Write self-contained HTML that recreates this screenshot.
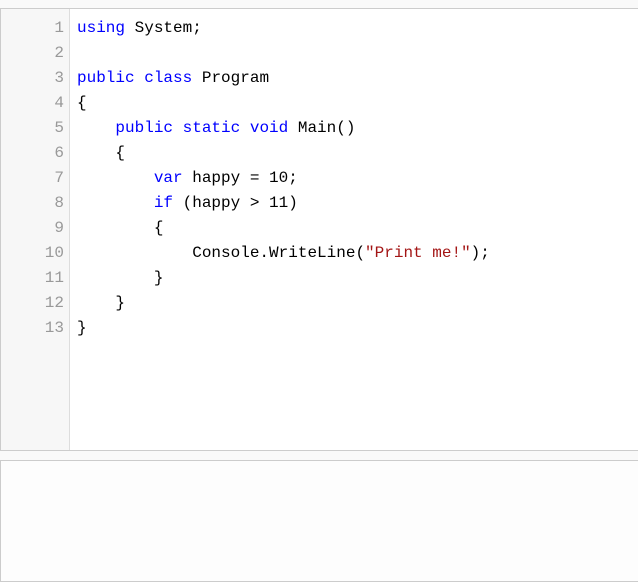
<!DOCTYPE html>
<html><head><style>
html,body{margin:0;padding:0;width:638px;height:569px;overflow:hidden;background:#f9f9f9;}
.ed{position:absolute;left:0;top:8px;width:640px;height:441px;border:1px solid #ccc;background:#fff;}
.gut{position:absolute;left:0;top:0;width:68px;height:441px;background:#f7f7f7;border-right:1px solid #ddd;}
.ln,.code{position:absolute;top:7px;font-family:"Liberation Mono",monospace;font-size:16px;line-height:25px;white-space:pre;}
.ln{right:0;width:63px;text-align:right;color:#999;left:0;}
.code{left:76px;color:#000;}
.k{color:#0000ff}.s{color:#a31515}
.out{position:absolute;left:0;top:460px;width:640px;height:120px;border:1px solid #ccc;background:#fdfdfd;}
</style></head><body>
<div class="ed"><div class="gut"><div class="ln">1
2
3
4
5
6
7
8
9
10
11
12
13</div></div>
<div class="code"><span class="k">using</span> System;

<span class="k">public</span> <span class="k">class</span> Program
{
    <span class="k">public</span> <span class="k">static</span> <span class="k">void</span> Main()
    {
        <span class="k">var</span> happy = 10;
        <span class="k">if</span> (happy &gt; 11)
        {
            Console.WriteLine(<span class="s">"Print me!"</span>);
        }
    }
}</div></div>
<div class="out"></div>
</body></html>
